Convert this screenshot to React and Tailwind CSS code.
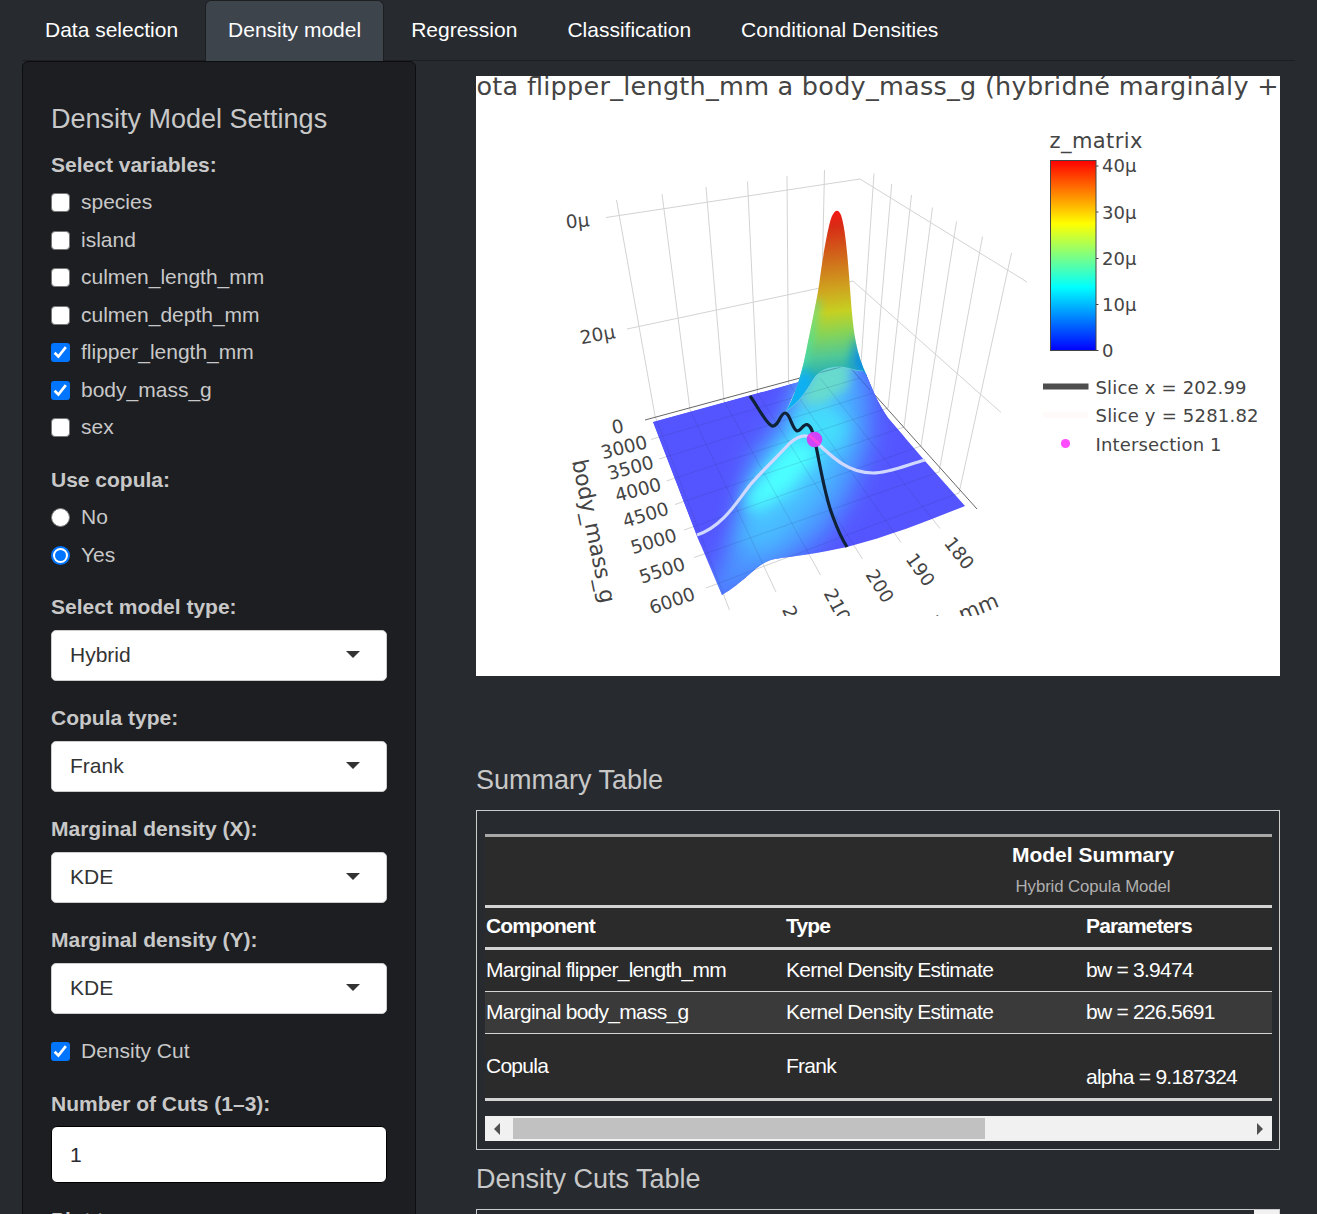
import React from "react";

const tabs = ["Data selection", "Density model", "Regression", "Classification", "Conditional Densities"];

const variables = [
  ["species", false],
  ["island", false],
  ["culmen_length_mm", false],
  ["culmen_depth_mm", false],
  ["flipper_length_mm", true],
  ["body_mass_g", true],
  ["sex", false],
];

function CheckRow({ label, checked }) {
  return (
    <div className="flex h-[37.5px] items-center gap-[11px]">
      <span
        className={
          checked
            ? "flex size-[19px] items-center justify-center rounded-[3px] bg-[#0075ff]"
            : "size-[19px] rounded-[4px] border border-[#767676] bg-white"
        }
      >
        {checked && (
          <svg viewBox="0 0 19 19" className="size-[19px]" fill="none" stroke="#fff" strokeWidth="2.7">
            <path d="M3.6 9.8 7.4 13.5 14.8 4.2" />
          </svg>
        )}
      </span>
      <span className="pb-[1px]">{label}</span>
    </div>
  );
}

function RadioRow({ label, checked }) {
  return (
    <div className="flex h-[37.5px] items-center gap-[11px]">
      <span
        className={
          checked
            ? "flex size-[19px] items-center justify-center rounded-full border-2 border-[#0075ff] bg-white"
            : "size-[19px] rounded-full border border-[#767676] bg-white"
        }
      >
        {checked && <span className="size-[11px] rounded-full bg-[#0075ff]" />}
      </span>
      <span className="pb-[1px]">{label}</span>
    </div>
  );
}

function Label({ children }) {
  return <div className="h-[30px] font-bold leading-[30px]">{children}</div>;
}

function SelectField({ label, value }) {
  return (
    <div className="mb-[22px]">
      <Label>{label}</Label>
      <div className="mt-[8px] flex h-[51px] items-center justify-between rounded-[5px] border border-[#ccc] bg-white pl-[18px] pr-[26px] text-[#333]">
        <span className="pb-[2px]">{value}</span>
        <svg width="14" height="7" viewBox="0 0 14 7" className="mb-[3px]">
          <path d="M0 0H14L7 7Z" fill="#333" />
        </svg>
      </div>
    </div>
  );
}

const grid = [
  "M616.5 200 655 416", "M662 194 690 410", "M706 187 724 401", "M747.5 181.5 757.5 393",
  "M787 176 788.5 383", "M824.5 170 820 378", "M874 173.5 860 378", "M891.7 184 873.5 393",
  "M911.5 195 888 408", "M932.5 207.5 904 427", "M956.5 221.5 921 446", "M982.5 236.5 939 472",
  "M1011.5 253 959 493", "M606 217.5 860 179 1027 282", "M627 329 853 281 1001 412.5",
];

const floor = [
  "M651 439.5 860 378", "M659 459 873.5 393", "M666.5 481 888 408", "M675 504.5 904 427",
  "M684 530 921 446", "M694 557.5 939 472", "M706 588 959 493", "M655 416 729.5 610",
  "M690 410 776 592", "M724 401 820.5 575", "M757.5 393 862.5 559", "M788.5 383 901 542.5",
  "M820 378 940 528.5",
];

const sceneLabels = [
  ["0µ", 577.5, 220.5, -6], ["20µ", 597.5, 334.5, -10], ["0", 617.5, 426.5, -12],
  ["3000", 624, 447, -14], ["3500", 630.5, 467.5, -15], ["4000", 638, 489.5, -15],
  ["4500", 645.5, 514.5, -17], ["5000", 653.5, 541, -17], ["5500", 662, 570, -18],
  ["6000", 672, 600.5, -19], ["180", 959.5, 553, 52], ["190", 920.5, 569.5, 55],
  ["200", 880, 586, 58], ["210", 837.5, 605.5, 62], ["220", 795, 623, 66],
];

const frontSurface =
  "M653 422 L799 382 L786 411 C800 402 807 390 813 380 C819 370 829 367 840 367 C848 367 854 371 863 371 L866 374 C872 388 877 402 888 418 L925 461 L965 506 C930 520 890 536 847 547 C820 553 795 556 775 559 C757 562 750 578 722 595 L697 536 Z";
const peak =
  "M785 413 C794 398 801 377 806 352 C812 322 818 295 820 278 C823 255 829 222 832 216 Q837 206 841 215 C845 227 847 250 849 275 C851 300 852 322 856 343 C858 354 862 366 867 376 L858 410 L800 415 Z";

function DensityPlot() {
  return (
    <svg width="804" height="600" viewBox="476 76 804 600" className="block bg-white" fontFamily="'DejaVu Sans', Verdana, sans-serif" fill="#444">
      <defs>
        <clipPath id="scene"><rect x="476" y="76" width="804" height="540" /></clipPath>
        <clipPath id="front"><path d={frontSurface} /></clipPath>
        <clipPath id="peakClip"><path d={peak} /></clipPath>
        <linearGradient id="jet" x1="0" y1="0" x2="0" y2="1">
          <stop offset="0" stopColor="#f00" />
          <stop offset=".333" stopColor="#ff0" />
          <stop offset=".667" stopColor="#0ff" />
          <stop offset="1" stopColor="#00f" />
        </linearGradient>
        <linearGradient id="peakFill" gradientUnits="userSpaceOnUse" x1="830" y1="209" x2="848" y2="385">
          <stop offset="0" stopColor="#fa1414" />
          <stop offset=".1" stopColor="#d82c16" />
          <stop offset=".28" stopColor="#d06a1a" />
          <stop offset=".45" stopColor="#cfa31f" />
          <stop offset=".58" stopColor="#c6d022" />
          <stop offset=".7" stopColor="#88d455" />
          <stop offset=".83" stopColor="#50c896" />
          <stop offset=".93" stopColor="#28b0b4" />
          <stop offset="1" stopColor="#1aa4c8" />
        </linearGradient>
        <filter id="b3" x="-50%" y="-50%" width="200%" height="200%"><feGaussianBlur stdDeviation="4" /></filter>
        <filter id="b5" x="-50%" y="-50%" width="200%" height="200%"><feGaussianBlur stdDeviation="5.5" /></filter>
        <filter id="b8" x="-50%" y="-50%" width="200%" height="200%"><feGaussianBlur stdDeviation="8" /></filter>
        <filter id="b12" x="-50%" y="-50%" width="200%" height="200%"><feGaussianBlur stdDeviation="12" /></filter>
      </defs>

      <text x="476.5" y="95" fontSize="25.5" textLength="802" lengthAdjust="spacing">ota flipper_length_mm a body_mass_g (hybridné marginály +</text>

      <g clipPath="url(#scene)">
        <g fill="none" stroke="#d3d3d3" strokeWidth="1">
          {grid.map((d) => <path key={d} d={d} />)}
          {floor.map((d) => <path key={d} d={d} />)}
        </g>
        <path d="M645 420 848 365 977 509" fill="none" stroke="#666" strokeWidth="1" />

        <path d={frontSurface} fill="#5555ff" />
        <path d={peak} fill="url(#peakFill)" />
        <g clipPath="url(#peakClip)">
          <path d="M857 335 L850 366 L872 384 L876 366 Z" fill="#0f8fe0" filter="url(#b5)" />
          <path d="M816 300 C811 335 804 355 794 385" stroke="#3ce8b8" strokeOpacity=".6" strokeWidth="9" fill="none" filter="url(#b3)" />
          <path d="M802 368 L776 418 L800 418 L814 378 Z" fill="#08b0f4" filter="url(#b3)" />
        </g>

        <g clipPath="url(#front)">
          <path d="M653 422 L799 382 L786 411 L782 460 L700 545Z" fill="#5555ff" />
          <path d="M784 413 C800 402 807 390 813 380 C819 370 829 367 840 367 C848 367 854 371 863 371 L896 410 L930 520 L786 520 Z" fill="#5555ff" />
          <path d="M700 612 L742 515 L752 455 L790 416 L808 360 L852 352 L872 385 L872 440 L850 500 L826 535 L800 556 L750 585 Z" fill="#4c94ff" filter="url(#b12)" />
          <path d="M736 550 L748 490 L780 440 L796 404 L812 355 L846 355 L850 400 L852 440 L830 488 L804 520 L768 552 Z" fill="#48c0ff" filter="url(#b12)" />
          <path d="M806 432 L780 450 L744 500 L754 514 L790 492 L822 452 Z" fill="#4cffff" filter="url(#b8)" />
          <path d="M792 416 L822 402 L848 420 L842 448 L800 446 Z" fill="#44e0fc" fillOpacity=".9" filter="url(#b8)" />
          <path d="M798 404 L818 360 L852 360 L848 388 L822 404 Z" fill="#6ce0c4" fillOpacity=".85" filter="url(#b5)" />
          <g fill="none" stroke="#203060" strokeOpacity=".13" strokeWidth="1">
            {floor.map((d) => <path key={d} d={d} />)}
            <path d="M800 378 848 365 870 390" strokeOpacity=".35" />
          </g>
        </g>
        <path d="M785 412 C800 402 807 390 813 380 C819 370 829 367 840 367 C848 367 854 371 863 371" fill="none" stroke="#7ee8dc" strokeOpacity=".5" strokeWidth="1" />

        <path d="M697 535 C722 527 737 502 750 485 C763 470 777 457 790 443 C799 435 807 433 814 440 C834 459 849 473 873 473 C890 473 909 464 925 460" fill="none" stroke="#d0d8ff" strokeWidth="3.2" />
        <path d="M750 396 C757 405 766 424 772 426 C779 427 780 413 785 413 C790 413 792 429 797 431 C801 431 803 424 807 424.500 C812 426 813 434 815 441 C821 470 825 497 833 517 Q840 536 847 547" fill="none" stroke="#102238" strokeWidth="3.2" />
        <circle cx="814.5" cy="439.5" r="7.8" fill="#cf44f8" />
        <path d="M809 435 819 444" stroke="#fb45e4" strokeWidth="3" />

        <g fontSize="18.5" textAnchor="middle">
          {sceneLabels.map(([t, x, y, r]) => (
            <text key={t} transform={`translate(${x} ${y}) rotate(${r})`} y="6.7">{t}</text>
          ))}
        </g>
        <text transform="translate(572 461) rotate(78.500)" fontSize="22" textLength="146">body_mass_g</text>
        <text transform="translate(1000 606) rotate(-23)" fontSize="21" textAnchor="end">flipper_length_mm</text>
      </g>

      <text x="1049.500" y="148" fontSize="21" textLength="93">z_matrix</text>
      <rect x="1050.500" y="160.500" width="45.500" height="190" fill="url(#jet)" stroke="#444" />
      <g stroke="#444" strokeWidth="1.2">
        <path d="M1096 166h2.500M1096 212h2.500M1096 258.500h2.500M1096 304.500h2.500M1096 350.500h2.500" />
      </g>
      <g fontSize="18">
        <text x="1102" y="172">40µ</text>
        <text x="1102" y="219">30µ</text>
        <text x="1102" y="265">20µ</text>
        <text x="1102" y="311">10µ</text>
        <text x="1102" y="357">0</text>
        <text x="1095.500" y="394" textLength="151">Slice x = 202.99</text>
        <text x="1095.500" y="422" textLength="163">Slice y = 5281.82</text>
        <text x="1095.500" y="451" textLength="126">Intersection 1</text>
      </g>
      <rect x="1043" y="383.500" width="45.500" height="6" fill="#4d4d4d" />
      <rect x="1043" y="412" width="45.500" height="6" fill="#fffafa" />
      <circle cx="1065.500" cy="443.500" r="4.600" fill="#ff4dff" />
    </svg>
  );
}

function Row({ cells, className }) {
  return (
    <div className={"grid grid-cols-[300px_300px_616px] items-center " + className}>
      {cells.map((c) => <div key={c} className="pl-[1px]">{c}</div>)}
    </div>
  );
}

function SummaryTable() {
  return (
    <div className="h-[340px] border border-[#ccc] px-[8px] pr-[7px] pt-[23px]">
      <div className="overflow-hidden text-white">
        <div className="w-[1216px] tracking-[-0.74px]">
          <div className="h-[74px] border-b-[3px] border-t-[3px] border-b-[#d3d3d3] border-t-[#a8a8a8] bg-[#2b2b2b] pt-[3px] text-center tracking-normal">
            <div className="h-[32px] font-bold leading-[30px]">Model Summary</div>
            <div className="h-[30px] text-[16.8px] leading-[29px] tracking-[-0.1px] text-[#b0b0b0]">Hybrid Copula Model</div>
          </div>
          <Row cells={["Component", "Type", "Parameters"]} className="h-[42px] border-b-[3px] border-[#d3d3d3] bg-[#2b2b2b] pb-[3px] font-bold tracking-[-0.87px]" />
          <Row cells={["Marginal flipper_length_mm", "Kernel Density Estimate", "bw = 3.9474"]} className="h-[42px] border-b border-[#d3d3d3] bg-[#2b2b2b] pb-[2px]" />
          <Row cells={["Marginal body_mass_g", "Kernel Density Estimate", "bw = 226.5691"]} className="h-[42px] border-b border-[#d3d3d3] bg-[#3a3a3a] pb-[2px]" />
          <div className="grid h-[67px] grid-cols-[300px_300px_616px] border-b-[3px] border-[#d3d3d3] bg-[#2b2b2b] leading-[30px]">
            <div className="pl-[1px] pt-[17px]">Copula</div>
            <div className="pl-[1px] pt-[17px]">Frank</div>
            <div className="pl-[1px] pt-[28px]">alpha = 9.187324</div>
          </div>
        </div>
      </div>
      <div className="mt-[15px] flex h-[25px] items-center justify-between bg-[#f1f1f1] pl-[9px] pr-[9px]">
        <div className="flex items-center gap-[13px]">
          <svg width="6" height="12" viewBox="0 0 6 12"><path d="M6 0V12L0 6Z" fill="#505050" /></svg>
          <div className="h-[21px] w-[472px] bg-[#c1c1c1]" />
        </div>
        <svg width="6" height="12" viewBox="0 0 6 12"><path d="M0 0V12L6 6Z" fill="#505050" /></svg>
      </div>
    </div>
  );
}

export default function App() {
  return (
    <div className="h-[1214px] overflow-hidden bg-[#272b30] px-[22px] font-['Liberation_Sans',Arial,sans-serif] text-[21px] leading-[30px] text-[#c8c8c8]">
      <nav className="flex h-[61px] gap-[4px] border-b border-[#1c1e22] text-white">
        {tabs.map((t) => (
          <div
            key={t}
            className={
              t === "Density model"
                ? "h-[61px] rounded-t-[6px] border-x border-t border-[#1c1e22] bg-[#3e444c] px-[22px] pt-[14px]"
                : "px-[23px] pt-[15px]"
            }
          >
            {t}
          </div>
        ))}
      </nav>
      <div className="flex gap-[60px]">
        <aside className="h-[1300px] w-[394px] shrink-0 rounded-[6px] border border-[#0c0d0e] bg-[#1c1e22] px-[28px] pt-[41px]">
          <h4 className="h-[32px] text-[27px] leading-[32px]">Density Model Settings</h4>
          <div className="mt-[15px]">
            <Label>Select variables:</Label>
            <div className="mt-[4px]">
              {variables.map(([v, on]) => <CheckRow key={v} label={v} checked={on} />)}
            </div>
          </div>
          <div className="mt-[18.5px]">
            <Label>Use copula:</Label>
            <div className="mt-[4px]">
              <RadioRow label="No" />
              <RadioRow label="Yes" checked />
            </div>
          </div>
          <div className="mt-[18px]">
            <SelectField label="Select model type:" value="Hybrid" />
            <SelectField label="Copula type:" value="Frank" />
            <SelectField label="Marginal density (X):" value="KDE" />
            <SelectField label="Marginal density (Y):" value="KDE" />
          </div>
          <div className="-mt-[3px]">
            <CheckRow label="Density Cut" checked />
          </div>
          <div className="mt-[18.5px]">
            <Label>Number of Cuts (1–3):</Label>
            <div className="mt-[7px] flex h-[57px] items-center rounded-[6px] border border-black bg-white pl-[18px] text-[#272b30]">1</div>
          </div>
          <div className="mt-[22px]">
            <Label>Plot type:</Label>
          </div>
        </aside>
        <main className="w-[804px] shrink-0 pt-[15px]">
          <DensityPlot />
          <h4 className="mt-[88px] h-[32px] text-[27px] leading-[32px]">Summary Table</h4>
          <div className="mt-[14px]">
            <SummaryTable />
          </div>
          <h4 className="mt-[13px] h-[32px] text-[27px] leading-[32px]">Density Cuts Table</h4>
          <div className="mt-[14px] flex h-[200px] justify-end border border-[#ccc]">
            <div className="w-[25px] bg-[#f1f1f1]" />
          </div>
        </main>
      </div>
    </div>
  );
}
